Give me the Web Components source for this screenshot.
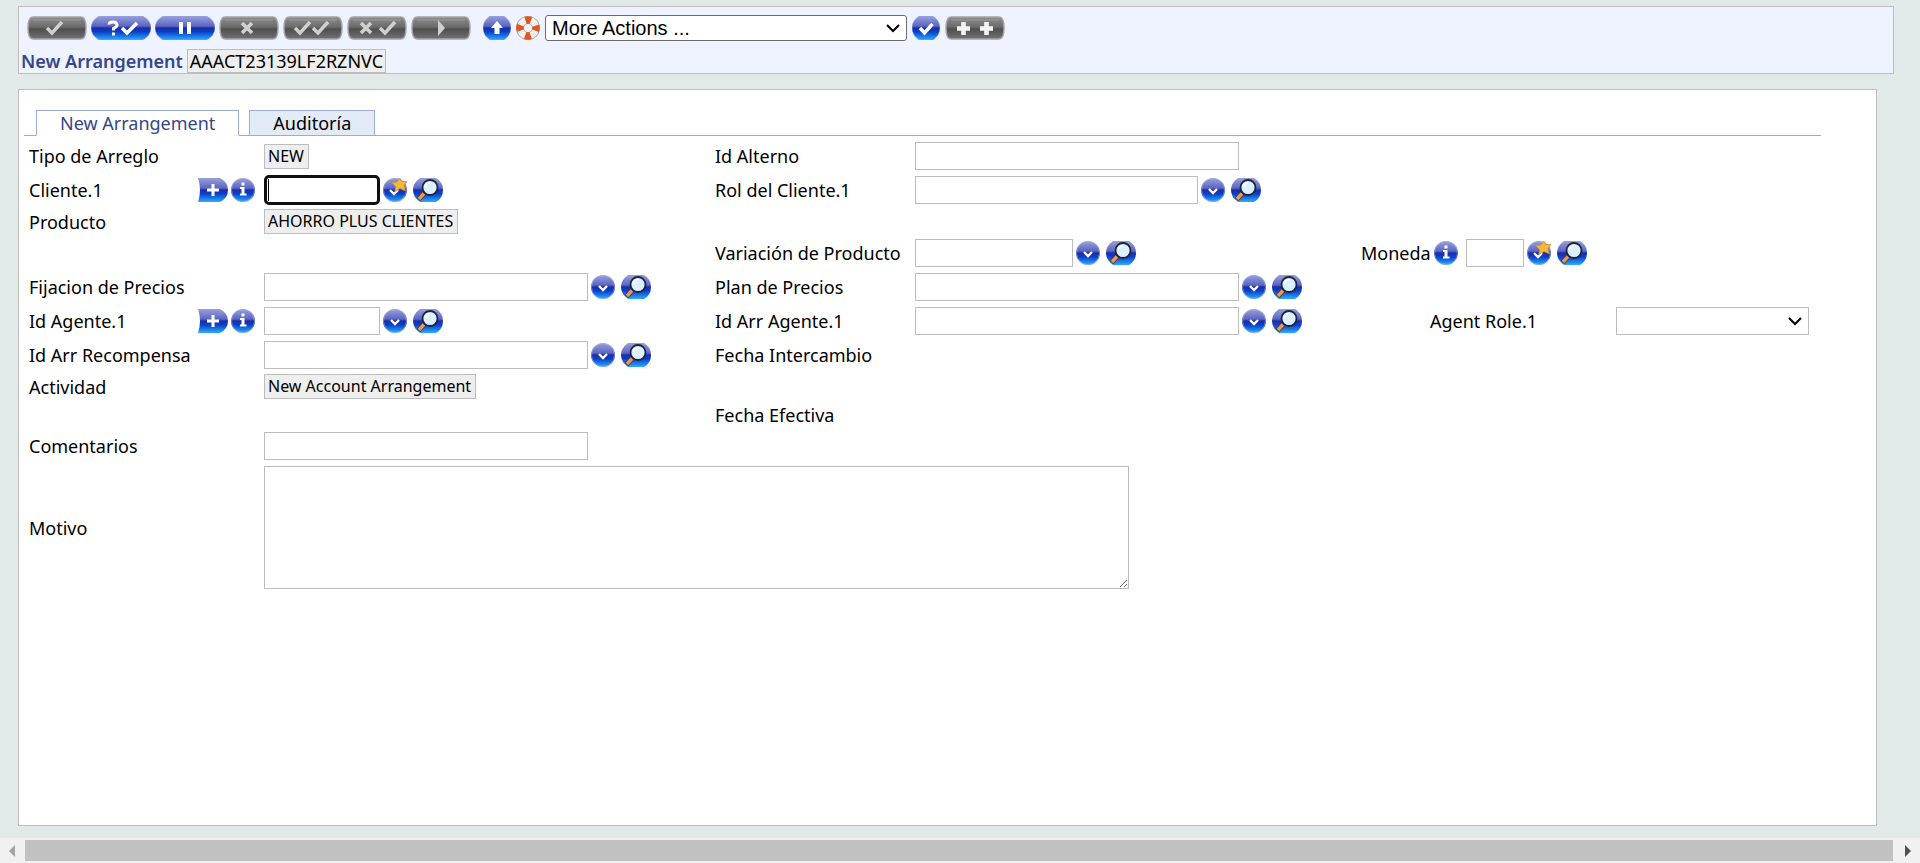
<!DOCTYPE html>
<html lang="es">
<head>
<meta charset="utf-8">
<title>New Arrangement</title>
<style>
html, body { height: 100%; margin: 0; }
body { background: #e1eae8; font: 18px/24px "Noto Sans", "Open Sans", sans-serif; color: #000; }
</style>
</head>
<body>
<t-app></t-app>
<script>
/* Shared icon shapes: width plus inner drawing, all 24px tall */
const PILL = 'M8 0H52Q60 5 60 12T52 24H8Q0 19 0 12T8 0Z';
const SMALL = 'M7 0H21Q28 5 28 12T21 24H7Q0 19 0 12T7 0Z';
const GREY = 'M6 1H54Q59 1 59 12T54 23H6Q1 23 1 12T6 1Z';
const blue = d => `<path d="${d}" fill="url(#b)"/><path d="${d}" fill="none" stroke="#8fa4e6" stroke-opacity=".5"/>`;
const grey = `<path d="${GREY}" fill="url(#g)" stroke="#a4a4a4" stroke-width="1.5"/><path d="M6 4H54" stroke="#9b9b9b" stroke-width="1"/>`;
const tick = (x, c) => `<path d="M${x} 12l5 5 10-11" fill="none" stroke="${c}" stroke-width="3.4"/>`;
const cross = x => `<path d="M${x} 7l10 10M${x + 10} 7l-10 10" stroke="#d0d0d0" stroke-width="3.6"/>`;
const plus = x => `<path d="M${x} 12.500h13M${x + 6.5} 6v13" stroke="#f4f4f4" stroke-width="4.600"/>`;
const ball = '<circle cx="12" cy="12" r="12" fill="url(#b)"/><circle cx="12" cy="12" r="11.500" fill="none" stroke="#a9b4e6" stroke-opacity=".6"/>';
const ICONS = {
  commit: [60, grey + tick(20, '#d0d0d0')],
  validate: [60, blue(PILL) + '<path d="M18 8.500Q18 6 22 6T26 9Q26 11 22.500 12.500V14.500M22.500 16.500V19.500" fill="none" stroke="#fff" stroke-width="3"/><path d="M31 12l5 5 10-10" fill="none" stroke="#fff" stroke-width="3.600"/>'],
  hold: [60, blue(PILL) + '<path d="M26 6V18M34 6V18" stroke="#fff" stroke-width="4"/>'],
  delete: [60, grey + cross(23)],
  authorise: [60, grey + tick(12, '#d0d0d0') + tick(30, '#d0d0d0')],
  reverse: [60, grey + cross(14) + tick(33, '#d0d0d0')],
  next: [60, grey + '<path d="M27 4V20L34 12Z" fill="#d0d0d0"/>'],
  up: [28, blue(SMALL) + '<path d="M14 5L20 12H16.500V18H11.500V12H8Z" fill="#fff"/>'],
  help: [24, '<circle cx="12" cy="12" r="8" fill="none" stroke="#a59d95" stroke-width="8"/><circle cx="12" cy="12" r="8" fill="none" stroke="#f4f1ee" stroke-width="6.400"/><circle cx="12" cy="12" r="8" fill="none" stroke="#df5624" stroke-width="7.400" stroke-dasharray="5.600 6.966" stroke-dashoffset="2.800"/>'],
  go: [28, blue(SMALL) + '<path d="M8 12l4.500 5 8-9" fill="none" stroke="#fff" stroke-width="3.400"/>'],
  expand: [60, grey + plus(12) + plus(35)],
  add: [30, '<path d="M0 0H22Q30 4 30 12T22 24H0Q4 12 0 0Z" fill="url(#b)"/><path d="M9 12H21M15 6V18" stroke="#fff" stroke-width="3"/>'],
  info: [24, ball + '<path d="M10.500 4.500H13.500V7.500H10.500ZM9 9H13.500V15.500H15.500V17.500H9V15.500H10.500V11H9Z" fill="#fff"/>'],
  drop: [24, ball + '<path d="M8 11l4 4 4-4" fill="none" stroke="#fff" stroke-width="2.400"/>'],
  star: [24, ball + '<path d="M7 12l4 4 4-4" fill="none" stroke="#fff" stroke-width="2.400"/><path d="M16.500 0L18.800 3.500 24 3.500 21 7.500 22.500 13 17 10.500 12 13.500 12.500 8.500 8.500 4.500 14 4Z" fill="#f3b93a" stroke="#c98a28" stroke-width=".7"/>'],
  search: [30, '<path d="M7 0H23Q30 4 30 12T23 24H7Q0 19 0 12T7 0Z" fill="url(#b)"/><path d="M11.500 15L5.500 21.500" stroke="#5b3218" stroke-width="5"/><path d="M11 15.500L6 21" stroke="#e39a6a" stroke-width="3.400"/><circle cx="17" cy="9.500" r="7.500" fill="#dcf0ff" stroke="#1d2440" stroke-width="1.800"/><path d="M12.500 9Q13 5 17 4.500" fill="none" stroke="#fff" stroke-width="1.600"/>']
};

customElements.define('t-icon', class extends HTMLElement {
  connectedCallback() {
    const [w, art] = ICONS[this.getAttribute('name')];
    this.attachShadow({ mode: 'open' }).innerHTML = `
<style>
:host { display: block; flex: none; height: 24px; }
button { display: block; padding: 0; border: 0; background: none; cursor: pointer; }
svg { display: block; }
</style>
<button type="button" aria-label="${this.getAttribute('name')}"><svg width="${w}" height="24" viewBox="0 0 ${w} 24">
<defs>
<linearGradient id="b" x2="0" y2="1"><stop offset="0" stop-color="#9aa1da"/><stop offset=".42" stop-color="#5a66c2"/><stop offset=".5" stop-color="#1c2ca6"/><stop offset=".66" stop-color="#0a40c8"/><stop offset="1" stop-color="#2cacff"/></linearGradient>
<linearGradient id="g" x2="0" y2="1"><stop offset="0" stop-color="#8e8e8e"/><stop offset=".45" stop-color="#6b6b6b"/><stop offset=".55" stop-color="#4f4f4f"/><stop offset="1" stop-color="#727272"/></linearGradient>
</defs>${art}</svg></button>`;
  }
});

const CHEVRON = `url("data:image/svg+xml,%3Csvg xmlns='http://www.w3.org/2000/svg' width='14' height='10'%3E%3Cpath d='M1 2l6 6 6-6' fill='none' stroke='%23000' stroke-width='2'/%3E%3C/svg%3E") no-repeat right 6px center #fff`;

/* One label with its control and the buttons beside it */
customElements.define('t-field', class extends HTMLElement {
  connectedCallback() {
    const a = n => this.getAttribute(n);
    const icons = s => (s || '').split(' ').filter(Boolean).map(n => `<t-icon name="${n}"></t-icon>`).join('');
    const kind = a('kind') || 'input';
    const control = {
      input: `<input id="c" type="text" class="${this.hasAttribute('active') ? 'active' : ''}">`,
      value: `<output id="c">${a('value')}</output>`,
      select: '<select id="c"><option></option></select>',
      textarea: '<textarea id="c"></textarea>',
      none: ''
    }[kind];
    this.attachShadow({ mode: 'open' }).innerHTML = `
<style>
:host { display: flex; align-items: center; white-space: nowrap; }
.name { box-sizing: border-box; flex: none; width: ${a('lead')}px; padding-right: 9px; display: flex; align-items: center; gap: 3px; }
label { flex: 1; }
input, select, textarea { box-sizing: border-box; width: ${a('width')}px; height: 28px; margin: 0; border: 1px solid #bdbdbd; border-radius: 0; background: #fff; font: inherit; }
input { padding: 0 3px; }
select { appearance: none; background: ${CHEVRON}; }
textarea { display: block; height: 123px; }
.active { border: 3px solid #101010; border-radius: 5px; outline: 0; height: 30px; background: linear-gradient(#000, #000) 1px center / 1px 22px no-repeat #fff; }
output { border: 1px solid #bdbdbd; background: #eee; padding: 0 4px 0 3px; font-size: 16px; line-height: 23px; }
.after { display: flex; gap: 6px; margin-left: 3px; }
</style>
<span class="name">${kind === 'none' ? `<span>${a('label')}</span>` : `<label for="c">${a('label')}</label>`}${icons(a('before'))}</span>${control}<span class="after">${icons(a('after'))}</span>`;
  }
});

customElements.define('t-toolbar', class extends HTMLElement {
  connectedCallback() {
    const icons = s => s.split(' ').map(n => `<t-icon name="${n}"></t-icon>`).join('');
    this.attachShadow({ mode: 'open' }).innerHTML = `
<style>
:host { display: block; border: 1px solid #bdbdbd; background: #eff3ff; }
.bar { display: flex; align-items: center; height: 26px; padding: 8px 8px 7px; }
.group { display: flex; gap: 4px; }
.more { display: flex; align-items: center; gap: 5px; margin-left: 12px; }
select { appearance: none; box-sizing: border-box; width: 362px; height: 26px; padding: 0 6px; border: 1px solid #6b6b6b; border-radius: 3px; background: ${CHEVRON}; font: 20px/24px "Liberation Sans", Arial, sans-serif; color: #000; }
.title { display: flex; align-items: center; gap: 4px; padding-left: 2px; height: 25px; }
h1 { margin: 0; font-size: 18px; font-weight: 600; color: #34478a; }
output { border: 1px solid #bdbdbd; background: #eee; padding: 0 2px; line-height: 22px; }
</style>
<div class="bar"><div class="group">${icons('commit validate hold delete authorise reverse next')}</div>
<div class="more">${icons('up help')}<select aria-label="More Actions"><option>More Actions ...</option></select>${icons('go expand')}</div></div>
<div class="title"><h1>New Arrangement</h1><output>AAACT23139LF2RZNVC</output></div>`;
  }
});

customElements.define('t-tabs', class extends HTMLElement {
  connectedCallback() {
    this.attachShadow({ mode: 'open' }).innerHTML = `
<style>
:host { display: flex; gap: 10px; padding-left: 12px; box-shadow: inset 0 -1px #9aabd6; }
button { height: 26px; padding: 0 23px; border: 1px solid #9aabd6; background: #e4ebf8; font: inherit; color: #000; line-height: 24px; }
.on { background: #fff; border-bottom-color: #fff; color: #34478a; }
</style>
<button type="button" class="on">New Arrangement</button><button type="button">Auditoría</button>`;
  }
});

customElements.define('t-form', class extends HTMLElement {
  connectedCallback() {
    this.attachShadow({ mode: 'open' }).innerHTML = `
<style>
:host { display: grid; grid-template-columns: 686px 646px 1fr; grid-template-rows: 34px 34px 29px 34px 34px 34px 34px 29px 28px 34px auto; padding: 3px 0 0 10px; }
t-field { grid-column: 1; }
.b { grid-column: 2; }
.c { grid-column: 3; }
.role { margin-left: 69px; }
.r1 { grid-row: 1; } .r2 { grid-row: 2; } .r3 { grid-row: 3; } .r4 { grid-row: 4; } .r5 { grid-row: 5; } .r6 { grid-row: 6; }
.r7 { grid-row: 7; } .r8 { grid-row: 8; } .r9 { grid-row: 9; } .r10 { grid-row: 10; } .r11 { grid-row: 11; grid-column: 1 / 3; padding: 3px 0; }
</style>
<t-field class="r1" label="Tipo de Arreglo" lead="235" kind="value" value="NEW"></t-field>
<t-field class="b r1" label="Id Alterno" lead="200" width="324"></t-field>
<t-field class="r2" label="Cliente.1" lead="235" width="116" before="add info" after="star search" active></t-field>
<t-field class="b r2" label="Rol del Cliente.1" lead="200" width="283" after="drop search"></t-field>
<t-field class="r3" label="Producto" lead="235" kind="value" value="AHORRO PLUS CLIENTES"></t-field>
<t-field class="b r4" label="Variación de Producto" lead="200" width="158" after="drop search"></t-field>
<t-field class="c r4" label="Moneda" lead="105" width="58" before="info" after="star search"></t-field>
<t-field class="r5" label="Fijacion de Precios" lead="235" width="324" after="drop search"></t-field>
<t-field class="b r5" label="Plan de Precios" lead="200" width="324" after="drop search"></t-field>
<t-field class="r6" label="Id Agente.1" lead="235" width="116" before="add info" after="drop search"></t-field>
<t-field class="b r6" label="Id Arr Agente.1" lead="200" width="324" after="drop search"></t-field>
<t-field class="c r6 role" label="Agent Role.1" lead="186" width="193" kind="select"></t-field>
<t-field class="r7" label="Id Arr Recompensa" lead="235" width="324" after="drop search"></t-field>
<t-field class="b r7" label="Fecha Intercambio" lead="200" kind="none"></t-field>
<t-field class="r8" label="Actividad" lead="235" kind="value" value="New Account Arrangement"></t-field>
<t-field class="b r9" label="Fecha Efectiva" lead="200" kind="none"></t-field>
<t-field class="r10" label="Comentarios" lead="235" width="324"></t-field>
<t-field class="r11" label="Motivo" lead="235" width="865" kind="textarea"></t-field>`;
  }
});

customElements.define('t-panel', class extends HTMLElement {
  connectedCallback() {
    this.attachShadow({ mode: 'open' }).innerHTML = `
<style>
:host { display: block; border: 1px solid #bdbdbd; background: #fff; padding-top: 20px; }
::slotted(t-tabs) { margin: 0 55px 0 5px; }
</style><slot></slot>`;
  }
});

customElements.define('t-scrollbar', class extends HTMLElement {
  connectedCallback() {
    this.attachShadow({ mode: 'open' }).innerHTML = `
<style>
:host { display: flex; align-items: center; height: 25px; background: #f1f1f1; }
svg { flex: none; display: block; }
.thumb { flex: 1; height: 21px; background: #c1c1c1; }
</style>
<svg width="25" height="25"><path d="M15 7V19L9 13Z" fill="#a3a3a3"/></svg><div class="thumb"></div>
<svg width="27" height="25"><path d="M12 7V19L18 13Z" fill="#505050"/></svg>`;
  }
});

customElements.define('t-app', class extends HTMLElement {
  connectedCallback() {
    this.attachShadow({ mode: 'open' }).innerHTML = `
<style>
:host { display: flex; flex-direction: column; min-height: 100vh; }
t-toolbar { margin: 6px 26px 15px 18px; }
t-panel { flex: 1; margin: 0 43px 12px 18px; }
</style>
<t-toolbar></t-toolbar>
<t-panel><t-tabs></t-tabs><t-form></t-form></t-panel>
<t-scrollbar></t-scrollbar>`;
  }
});
</script>
</body>
</html>
